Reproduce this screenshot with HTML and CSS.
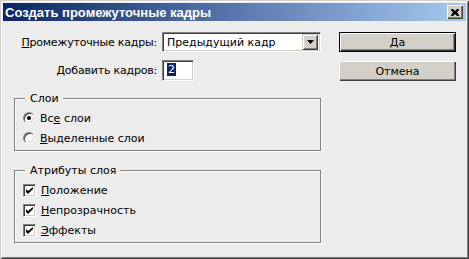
FILE: index.html
```html
<!DOCTYPE html>
<html lang="ru">
<head>
    <meta charset="UTF-8">
    <meta name="viewport" content="width=device-width, initial-scale=1.0">
    <title>Создать промежуточные кадры</title>
    <link rel="stylesheet" href="styles.css">
</head>
<body>

    <div class="window">
        <div class="titlebar">
            <span class="title">Создать промежуточные кадры</span>
            <span class="close-btn">
                <svg width="8" height="7" viewBox="0 0 8 7">
                    <path d="M0 0h2l2 2 2-2h2v1l-2 2.5 2 2.5v1h-2l-2-2-2 2h-2v-1l2-2.5-2-2.5z" fill="#000"/>
                </svg>
            </span>
        </div>

        <div class="content">
            <div class="main">
                <div class="form">
                    <label class="form-label"><u>П</u>ромежуточные кадры:</label>
                    <div class="select">
                        <span class="select-value">Предыдущий кадр</span>
                        <span class="select-arrow">
                            <svg width="7" height="4" viewBox="0 0 7 4"><path d="M0 0h7l-3.5 4z" fill="#000"/></svg>
                        </span>
                    </div>

                    <label class="form-label"><u>Д</u>обавить кадров:</label>
                    <div class="field"><span class="selected">2</span></div>
                </div>

                <!-- Слои -->
                <fieldset class="group group-layers">
                    <legend>Слои</legend>
                    <div class="option"><span class="radio checked"></span><span>Вс<u>е</u> слои</span></div>
                    <div class="option"><span class="radio"></span><span><u>В</u>ыделенные слои</span></div>
                </fieldset>

                <!-- Атрибуты слоя -->
                <fieldset class="group group-attrs">
                    <legend>Атрибуты слоя</legend>
                    <div class="option"><span class="checkbox"><svg width="7" height="7" viewBox="0 0 7 7"><path d="M0 2l2 2 5-4v2l-5 5-2-2z" fill="#000"/></svg></span><span><u>П</u>оложение</span></div>
                    <div class="option"><span class="checkbox"><svg width="7" height="7" viewBox="0 0 7 7"><path d="M0 2l2 2 5-4v2l-5 5-2-2z" fill="#000"/></svg></span><span><u>Н</u>епрозрачность</span></div>
                    <div class="option"><span class="checkbox"><svg width="7" height="7" viewBox="0 0 7 7"><path d="M0 2l2 2 5-4v2l-5 5-2-2z" fill="#000"/></svg></span><span><u>Э</u>ффекты</span></div>
                </fieldset>
            </div>

            <div class="actions">
                <button class="btn btn-default">Да</button>
                <button class="btn">Отмена</button>
            </div>
        </div>
    </div>

</body>
</html>
```

FILE: styles.css
```css
/* Base */
body {
    margin: 0;
    padding: 0;
    font-family: 'DejaVu Sans', sans-serif;
    font-size: 11px;
    color: #000;
    background-color: #ececec;
}

u {
    text-decoration: underline;
    text-underline-offset: 1px;
}

/* Window frame */
.window {
    width: 469px;
    height: 259px;
    box-sizing: border-box;
    padding: 3px;
    background-color: #ececec;
    box-shadow: inset 1px 1px 0 #d4d0c8, inset -1px -1px 0 #404040,
                inset 2px 2px 0 #fff, inset -2px -2px 0 #808080;
}

/* Title bar */
.titlebar {
    height: 18px;
    display: flex;
    align-items: center;
    padding-left: 2px;
    padding-right: 3px;
    background: linear-gradient(to right, #0a246a, #a6caf0);
}

.title {
    flex: 1;
    color: #fff;
    font-family: 'Liberation Sans', Arial, sans-serif;
    font-weight: bold;
    font-size: 13px;
    white-space: nowrap;
}

.close-btn {
    width: 16px;
    height: 14px;
    box-sizing: border-box;
    display: flex;
    align-items: center;
    justify-content: center;
    background-color: #d4d0c8;
    box-shadow: inset 1px 1px 0 #fff, inset -1px -1px 0 #404040, inset -2px -2px 0 #808080;
}

/* Content */
.content {
    display: flex;
    padding: 11px 10px 0 11px;
}

.main {
    width: 308px;
}

.form {
    display: grid;
    grid-template-columns: 143px auto;
    column-gap: 5px;
    row-gap: 8px;
    align-items: center;
}

.form-label {
    text-align: right;
    white-space: nowrap;
    letter-spacing: -0.2px;
}

/* Sunken fields */
.select, .field {
    box-sizing: border-box;
    background-color: #fff;
    border: 1px solid;
    border-color: #808080 #fff #fff #808080;
    box-shadow: inset 1px 1px 0 #404040, inset -1px -1px 0 #d4d0c8;
}

.select {
    width: 159px;
    height: 20px;
    display: flex;
    align-items: center;
    padding: 2px;
}

.select-value {
    flex: 1;
    padding-left: 2px;
}

.select-arrow {
    width: 16px;
    height: 16px;
    box-sizing: border-box;
    display: flex;
    align-items: center;
    justify-content: center;
    background-color: #d4d0c8;
    box-shadow: inset 1px 1px 0 #d4d0c8, inset -1px -1px 0 #404040,
                inset 2px 2px 0 #fff, inset -2px -2px 0 #808080;
}

.field {
    width: 32px;
    height: 21px;
    padding: 2px 0 0 4px;
}

.selected {
    display: inline-block;
    background-color: #0a246a;
    color: #fff;
    line-height: 13px;
    padding: 0 1px;
}

/* Group boxes */
.group {
    width: 307px;
    box-sizing: border-box;
    margin: 0;
    padding: 3px 8px 2px 8px;
    min-inline-size: 0;
    border: 1px solid #808080;
    box-shadow: inset 1px 1px 0 #fff, 1px 1px 0 #fff;
}

.group legend {
    line-height: 13px;
    margin-left: 2px;
    padding: 0 4px 0 5px;
    background-color: #ececec;
}

.group-layers {
    margin-top: 11px;
}

.group-attrs {
    margin-top: 13px;
}

.option {
    height: 20px;
    display: flex;
    align-items: center;
    white-space: nowrap;
}

.radio {
    position: relative;
    width: 12px;
    height: 12px;
    box-sizing: border-box;
    margin-right: 5px;
    border-radius: 50%;
    border: 1px solid;
    border-color: #808080 #fff #fff #808080;
    box-shadow: inset 1px 1px 0 #404040, inset -1px -1px 0 #d4d0c8;
    background-color: #fff;
}

.radio.checked::after {
    content: "";
    position: absolute;
    left: 3px;
    top: 3px;
    width: 4px;
    height: 4px;
    border-radius: 50%;
    background-color: #000;
}

.checkbox {
    width: 13px;
    height: 13px;
    box-sizing: border-box;
    margin-right: 5px;
    display: flex;
    align-items: center;
    justify-content: center;
    border: 1px solid;
    border-color: #808080 #fff #fff #808080;
    box-shadow: inset 1px 1px 0 #404040, inset -1px -1px 0 #d4d0c8;
    background-color: #fff;
}

/* Buttons */
.actions {
    margin-left: auto;
    width: 117px;
    display: flex;
    flex-direction: column;
    gap: 9px;
}

.btn {
    height: 20px;
    padding: 0;
    font-family: inherit;
    font-size: 11px;
    color: #000;
    background-color: #d4d0c8;
    border: none;
    box-shadow: inset 1px 1px 0 #fff, inset -1px -1px 0 #404040, inset -2px -2px 0 #808080;
}

.btn-default {
    border: 1px solid #000;
}
```
